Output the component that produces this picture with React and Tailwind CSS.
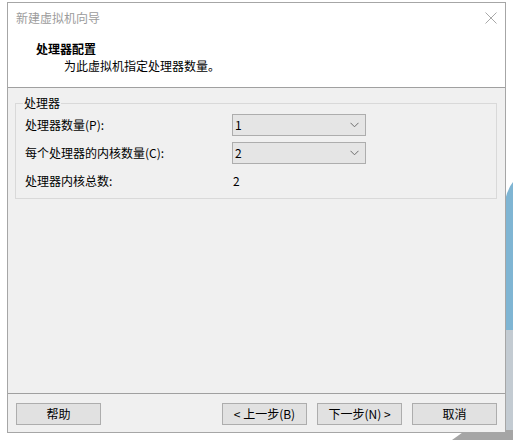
import React from "react";

const font = { fontFamily: '"Noto Sans CJK SC", "Liberation Sans", sans-serif' };

function Select({ value }) {
  return (
    <div className="flex h-[22px] w-[134px] items-center justify-between border border-[#adadad] bg-[#e5e5e5] pl-[2px] pr-[6px] text-[12px] leading-[16px] text-black">
      <span>{value}</span>
      <svg width="9" height="6" viewBox="0 0 9 6">
        <path d="M0.5 0.8 L4.5 4.8 L8.5 0.8" fill="none" stroke="#6d6d6d" strokeWidth="1" />
      </svg>
    </div>
  );
}

function Button({ children }) {
  return (
    <button className="flex h-[22px] w-[85px] items-center justify-center border border-[#adadad] bg-[#e1e1e1] text-[12px] leading-[16px] text-black">
      {children}
    </button>
  );
}

export default function App() {
  return (
    <div className="relative h-[440px] w-[513px] overflow-hidden bg-white pl-[7px] pt-[2px]" style={font}>
      <svg className="absolute left-0 top-0" width="513" height="440" viewBox="0 0 513 440">
        <path d="M505 200 Q508 188 513 182 L513 440 L505 440 Z" fill="#7fb5d3" />
        <path d="M505 330 L513 330 L513 440 L505 440 Z" fill="#c3cbd2" />
        <path d="M452 440 L466 430 L513 430 L513 440 Z" fill="#a5a5a5" />
      </svg>
      <div className="relative flex h-[431px] w-[499px] flex-col border border-[#a6a6a6] bg-[#f0f0f0]">
        <div className="flex h-[84px] flex-col bg-white">
          <div className="flex items-center justify-between pl-[8px] pr-[8px] pt-[7px]">
            <span className="text-[12px] leading-[16px] text-[#9c9c9c]">新建虚拟机向导</span>
            <svg width="12" height="12" viewBox="0 0 12 12">
              <path d="M0.5 0.5 L11.5 11.5 M11.5 0.5 L0.5 11.5" stroke="#a8a8a8" strokeWidth="1" />
            </svg>
          </div>
          <div className="pl-[28px] pt-[15px] text-[12px] font-bold leading-[16px] text-black">处理器配置</div>
          <div className="pl-[56px] pt-[1px] text-[12px] leading-[16px] text-black">为此虚拟机指定处理器数量。</div>
        </div>
        <div className="h-px bg-[#a0a0a0]" />
        <div className="flex-1">
          <fieldset className="ml-[7px] mr-[8px] mt-[7px] border border-[#d9d9d9] pb-[6px] pl-[9px]">
            <legend className="-ml-[2px] px-[1px] text-[12px] leading-[16px] text-black">处理器</legend>
            <div className="mt-[3px] grid grid-cols-[207px_134px] gap-y-[6px] text-[12px] leading-[16px] text-black">
              <div className="flex h-[22px] items-center">处理器数量(P):</div>
              <Select value="1" />
              <div className="flex h-[22px] items-center">每个处理器的内核数量(C):</div>
              <Select value="2" />
              <div className="flex h-[22px] items-center">处理器内核总数:</div>
              <div className="flex h-[22px] items-center pl-[1px]">2</div>
            </div>
          </fieldset>
        </div>
        <div className="h-px bg-[#a0a0a0]" />
        <div className="flex h-[38px] items-start justify-between px-[8px] pt-[9px]">
          <Button>帮助</Button>
          <div className="flex gap-[10px]">
            <Button>&lt; 上一步(B)</Button>
            <Button>下一步(N) &gt;</Button>
            <Button>取消</Button>
          </div>
        </div>
      </div>
    </div>
  );
}
